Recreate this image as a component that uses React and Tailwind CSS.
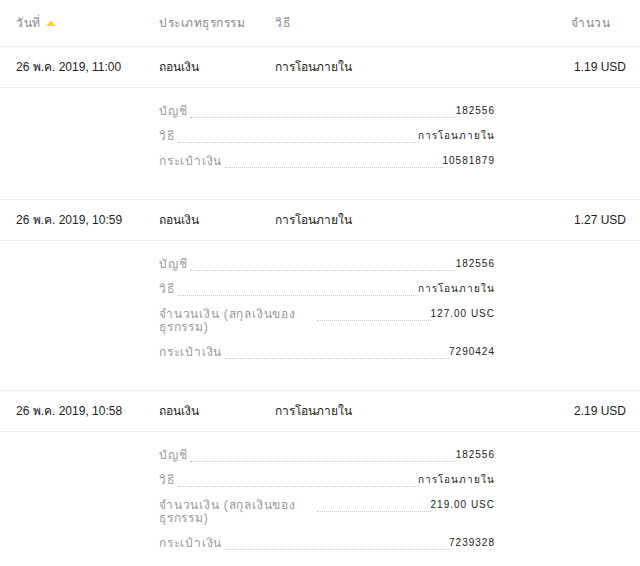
import React from 'react';

const rows = [
  {
    date: '26 พ.ค. 2019, 11:00',
    type: 'ถอนเงิน',
    method: 'การโอนภายใน',
    amount: '1.19 USD',
    details: [
      ['บัญชี', '182556'],
      ['วิธี', 'การโอนภายใน'],
      ['กระเป๋าเงิน', '10581879'],
    ],
  },
  {
    date: '26 พ.ค. 2019, 10:59',
    type: 'ถอนเงิน',
    method: 'การโอนภายใน',
    amount: '1.27 USD',
    details: [
      ['บัญชี', '182556'],
      ['วิธี', 'การโอนภายใน'],
      ['จำนวนเงิน (สกุลเงินของธุรกรรม)', '127.00 USC'],
      ['กระเป๋าเงิน', '7290424'],
    ],
  },
  {
    date: '26 พ.ค. 2019, 10:58',
    type: 'ถอนเงิน',
    method: 'การโอนภายใน',
    amount: '2.19 USD',
    details: [
      ['บัญชี', '182556'],
      ['วิธี', 'การโอนภายใน'],
      ['จำนวนเงิน (สกุลเงินของธุรกรรม)', '219.00 USC'],
      ['กระเป๋าเงิน', '7239328'],
    ],
  },
];

export default function App() {
  return (
    <div className="w-[640px] min-h-[566px] bg-white text-[12px] text-[#222]" style={{ fontFamily: "'Liberation Sans', 'Noto Sans', Tahoma, sans-serif" }}>
      {/* Header */}
      <div className="flex items-center h-[47px] border-b border-[#ececec] text-[#888] tracking-[0.5px]">
        <div className="w-[159px] pl-[16px] flex items-center gap-[5px]">
          <span>วันที่</span>
          <span className="w-0 h-0 border-l-[5px] border-r-[5px] border-b-[5px] border-l-transparent border-r-transparent border-b-[#ffd200]" />
        </div>
        <div className="w-[116px]">ประเภทธุรกรรม</div>
        <div className="flex-1">วิธี</div>
        <div className="pr-[30px]">จำนวน</div>
      </div>

      {rows.map((r, i) => (
        <div key={i}>
          <div className="flex items-center h-[41px] border-b border-[#ececec]">
            <div className="w-[159px] pl-[16px]">{r.date}</div>
            <div className="w-[116px]">{r.type}</div>
            <div className="flex-1">{r.method}</div>
            <div className="pr-[14px]">{r.amount}</div>
          </div>
          <div className="border-b border-[#ececec] pt-[17px] pb-[19px] pl-[159px]">
            <div className="w-[336px]">
              {r.details.map(([label, value], j) => (
                <div key={j} className="flex items-start mb-[12px] leading-[13px]">
                  <span className="max-w-[155px] text-[#999] tracking-[0.8px]">{label}</span>
                  <span className="flex-1 h-[13px] ml-[3px] border-b border-dotted border-[#c8c8c8]" />
                  <span className="h-[13px] text-[10px] leading-[12px] tracking-[1px] text-[#222]">{value}</span>
                </div>
              ))}
            </div>
          </div>
        </div>
      ))}
    </div>
  );
}
